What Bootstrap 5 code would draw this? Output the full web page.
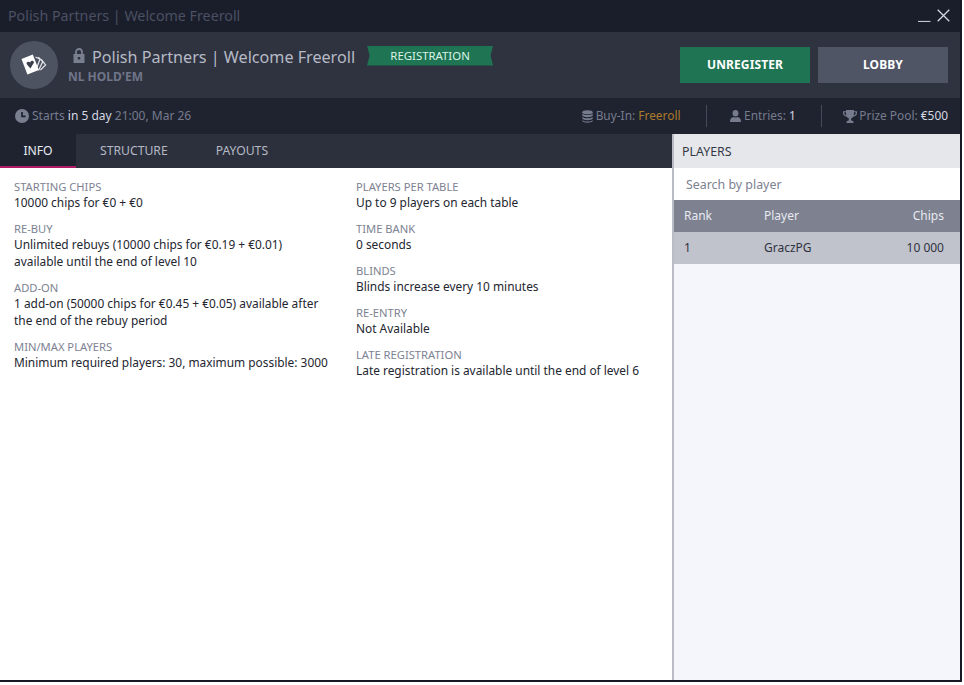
<!DOCTYPE html>
<html lang="en">
<head>
<meta charset="utf-8">
<title>Polish Partners | Welcome Freeroll</title>
<link href="https://cdn.jsdelivr.net/npm/bootstrap@5.3.0/dist/css/bootstrap.min.css" rel="stylesheet">
<style>
html,body{background:#fff;margin:0;height:100%}
body{font-family:"Noto Sans","Open Sans",sans-serif;font-size:13px;color:#2b2f3b}
.win{width:962px;height:682px;background:#171a26;border-right:2px solid #171a26;border-bottom:2px solid #171a26;overflow:hidden}
.titlebar{height:32px;background:#1a1e2b;color:#4b5062;font-size:14.25px;padding-left:8px;padding-bottom:1px}
.winbtns{padding-right:10px;gap:6px}
.hdr{height:66px;background:#2f333f;padding:0 12px 0 10px}
.avatar{width:48px;height:48px;border-radius:50%;background:#4e5361;flex:none}
.hd-text{margin-left:10px;margin-top:-1px}
.hd-lock{margin-left:5px;margin-right:7px;margin-top:-2px}
.hd-title{font-size:16.15px;color:#b6bac6;line-height:22px}
.hd-sub{font-size:12px;font-weight:700;color:#70758a;line-height:14px;margin-top:2px}
.ribbon{width:126px;height:20px;background:#1f7553;color:#dcf3e8;font-size:11.4px;line-height:20px;text-align:center;margin-left:12px;margin-top:-2px;clip-path:polygon(0 0,100% 0,98% 50%,100% 100%,0 100%,2% 50%)}
.hbtn{width:130px;height:36px;border:0;border-radius:0;color:#fff;font-size:12px;font-weight:700;letter-spacing:.1px;padding:0}
.hbtn-green{background:#1f7553;margin-right:8px}
.hbtn-green:hover{background:#1f7553;color:#fff}
.hbtn-grey{background:#505565}
.hbtn-grey:hover{background:#505565;color:#fff}
.stats{height:36px;background:#1f2330;color:#767b8d;font-size:11.9px;padding:0 12px 0 15px}
.stats b{font-weight:400;color:#d5d8e0}
.stats .gold{color:#ab7a2c}
.starts{font-size:12px}
.sep{width:1px;height:22px;background:#454a59;margin:0 21px 0 25.5px}
.ic-user{margin-left:2px;margin-right:3px}
.ic-db{margin-right:3px}
.ic-clock{margin-right:3px}
.ic-cup{margin-right:2px}
.main{height:546px}
.leftpane{width:672px;background:#fff}
.tabsrow{height:34px;background:#2c303c}
.tabx{display:block;height:34px;line-height:34px;font-size:12.2px;color:#b5b9c5;padding:0 24px;text-decoration:none}
.tabx.on{background:#1f2330;color:#e8eaf0;border-bottom:2px solid #b01a66;width:76px;padding:0;text-align:center}
.infocols{padding:12px 0 0 14px}
.infocol{flex:none;width:342px;padding-right:26px}
.inf{margin-bottom:11px}
.inf-l{font-size:11.2px;color:#7d8292;line-height:14px}
.inf-v{font-size:11.9px;color:#23262f;line-height:17px}
.rightpane{width:288px;background:#f5f6fb;border-left:2px solid #b9bcc6}
.pl-head{height:34px;line-height:35px;background:#e6e7eb;color:#343946;font-size:12.4px;padding-left:8px}
.pl-search.form-control{height:32px;border:0;border-radius:0;font-size:12.4px;padding:0 12px;color:#7d8190;background:#fff}
.pl-search.form-control::placeholder{color:#7d8190;opacity:1}
.pl-table{font-size:12px;width:100%;margin:0}
.pl-table th{background:#7d8190;color:#e8eaf0;font-weight:400;height:32px;padding:0 16px 0 10px}
.pl-table td{background:#c1c3cc;color:#2f333f;height:32px;padding:0 16px 0 10px}
.c-rank{width:80px}
.c-pl{width:100px}
</style>
</head>
<body>
<div class="win">
  <div class="titlebar d-flex align-items-center justify-content-between">
    <span>Polish Partners | Welcome Freeroll</span>
    <div class="d-flex align-items-center winbtns">
      <svg width="13" height="13" viewBox="0 0 13 13"><path d="M0 12.500h12.500" stroke="#c4c7d0" stroke-width="1.200"/></svg>
      <svg width="13" height="13" viewBox="0 0 13 13"><path d="M.7.7 12.300 12.300M12.300.7.7 12.300" stroke="#d5d8e0" stroke-width="1.300" fill="none"/></svg>
    </div>
  </div>

  <div class="hdr d-flex align-items-center">
    <div class="avatar d-flex align-items-center justify-content-center">
      <svg width="28" height="28" viewBox="0 0 28 28">
        <path d="M15.500 6 20 8.200 15.500 20" stroke="#e6e8ee" stroke-width="1.200" fill="none"/>
        <path d="M18.300 6.200 22.800 10.600 18.500 19.500" stroke="#e6e8ee" stroke-width="1.200" fill="none"/>
        <path d="M21.200 8.400 25.600 14 20.400 19" stroke="#e6e8ee" stroke-width="1.200" fill="none"/>
        <path d="M1.500 8 12.800 3.400 18.800 19 7.400 23.600Z" fill="#fff"/>
        <path d="M10.400 17.400 6.800 13.200c-.9-1.600.9-3.200 2.600-2.200l.8.6.4-1c1-1.600 3.200-1 3.400.9Z" fill="#3b3f4c"/>
      </svg>
    </div>
    <div class="hd-text">
      <div class="d-flex align-items-center">
        <svg width="12" height="15" viewBox="0 0 12 15" class="hd-lock"><path d="M3 7V4a3 3 0 0 1 6 0V7" stroke="#7a7f90" stroke-width="1.800" fill="none"/><path fill="#7a7f90" fill-rule="evenodd" d="M.5 6h11v9H.5ZM4.800 9h2.400v2.600H4.800Z"/></svg>
        <span class="hd-title">Polish Partners | Welcome Freeroll</span>
        <span class="ribbon">REGISTRATION</span>
      </div>
      <div class="hd-sub">NL HOLD'EM</div>
    </div>
    <div class="ms-auto d-flex">
      <button type="button" class="btn hbtn hbtn-green">UNREGISTER</button>
      <button type="button" class="btn hbtn hbtn-grey">LOBBY</button>
    </div>
  </div>

  <div class="stats d-flex align-items-center">
    <svg width="14" height="14" viewBox="0 0 14 14" class="ic-clock"><circle cx="7" cy="7" r="7" fill="#7a7f90"/><path d="M7 3v4.400h3.600" stroke="#1f2330" stroke-width="1.700" fill="none"/></svg>
    <span class="starts">Starts <b>in 5 day</b> 21:00, Mar 26</span>
    <div class="ms-auto d-flex align-items-center">
      <svg width="11" height="13" viewBox="0 0 11 13" class="ic-db" fill="#767b8d"><ellipse cx="5.500" cy="2.200" rx="5.200" ry="2"/><path d="M.3 3.600c1.400 2 9 2 10.400 0v1.800c-1 2.300-9.400 2.300-10.400 0Z"/><path d="M.3 6.800c1.400 2 9 2 10.400 0v1.800c-1 2.300-9.400 2.300-10.400 0Z"/><path d="M.3 9.900c1.400 2 9 2 10.400 0v1c-1 2.300-9.400 2.300-10.400 0Z"/></svg>
      <span>Buy-In: <span class="gold">Freeroll</span></span>
      <span class="sep"></span>
      <svg width="11" height="12" viewBox="0 0 11 12" class="ic-user" fill="#767b8d"><ellipse cx="5.500" cy="3.200" rx="2.900" ry="3.200"/><path d="M0 12c0-3.400 1.500-4.600 3.600-5 1.200.8 2.600.8 3.800 0 2.100.4 3.600 1.600 3.600 5Z"/></svg>
      <span>Entries: <b>1</b></span>
      <span class="sep"></span>
      <svg width="14" height="13" viewBox="0 0 14 13" class="ic-cup" fill="#767b8d"><path d="M3 0h8c0 .4 0 .8 0 1.200h3V3c0 2-1.600 3.400-3.700 3.700C9.700 7.500 9 8 8.200 8.200v2.300c1 0 2 .5 2.300 1.500v1h-7v-1c.3-1 1.300-1.500 2.300-1.500V8.200C5 8 4.300 7.500 3.700 6.700 1.600 6.400 0 5 0 3V1.200h3Zm-1.700 2.300V3c0 1.200.8 2 1.900 2.400C3 4.400 3 3.300 3 2.300Zm11.400 0H11c0 1 0 2.100-.2 3.100 1.100-.4 1.900-1.200 1.900-2.400Z" fill-rule="evenodd"/></svg>
      <span>Prize Pool: <b>€500</b></span>
    </div>
  </div>

  <div class="main d-flex">
    <div class="leftpane">
      <div class="tabsrow d-flex">
        <a class="tabx on" href="#">INFO</a>
        <a class="tabx" href="#">STRUCTURE</a>
        <a class="tabx" href="#">PAYOUTS</a>
      </div>
      <div class="infocols d-flex">
        <div class="infocol">
          <div class="inf"><div class="inf-l">STARTING CHIPS</div><div class="inf-v">10000 chips for €0 + €0</div></div>
          <div class="inf"><div class="inf-l">RE-BUY</div><div class="inf-v">Unlimited rebuys (10000 chips for €0.19 + €0.01) available until the end of level 10</div></div>
          <div class="inf"><div class="inf-l">ADD-ON</div><div class="inf-v">1 add-on (50000 chips for €0.45 + €0.05) available after the end of the rebuy period</div></div>
          <div class="inf"><div class="inf-l">MIN/MAX PLAYERS</div><div class="inf-v">Minimum required players: 30, maximum possible: 3000</div></div>
        </div>
        <div class="infocol">
          <div class="inf"><div class="inf-l">PLAYERS PER TABLE</div><div class="inf-v">Up to 9 players on each table</div></div>
          <div class="inf"><div class="inf-l">TIME BANK</div><div class="inf-v">0 seconds</div></div>
          <div class="inf"><div class="inf-l">BLINDS</div><div class="inf-v">Blinds increase every 10 minutes</div></div>
          <div class="inf"><div class="inf-l">RE-ENTRY</div><div class="inf-v">Not Available</div></div>
          <div class="inf"><div class="inf-l">LATE REGISTRATION</div><div class="inf-v">Late registration is available until the end of level 6</div></div>
        </div>
      </div>
    </div>
    <div class="rightpane">
      <div class="pl-head">PLAYERS</div>
      <input class="form-control pl-search" type="text" placeholder="Search by player">
      <table class="pl-table">
        <thead><tr><th class="c-rank">Rank</th><th class="c-pl">Player</th><th class="text-end">Chips</th></tr></thead>
        <tbody><tr><td>1</td><td>GraczPG</td><td class="text-end">10 000</td></tr></tbody>
      </table>
    </div>
  </div>
</div>
<script src="https://cdn.jsdelivr.net/npm/bootstrap@5.3.0/dist/js/bootstrap.bundle.min.js"></script>
</body>
</html>
